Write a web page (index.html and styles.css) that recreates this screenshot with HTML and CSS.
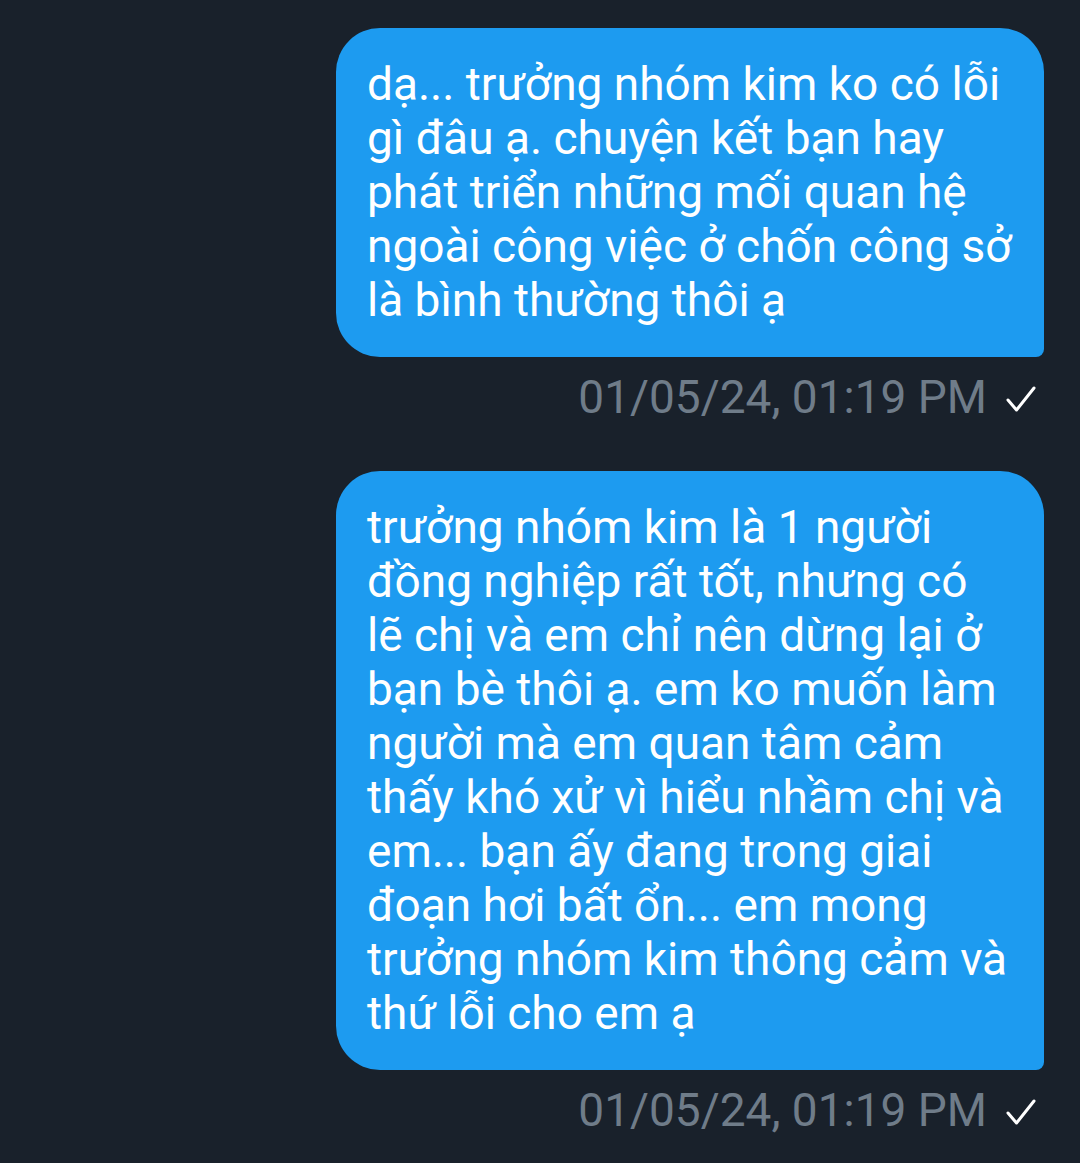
FILE: index.html
```html
<!DOCTYPE html>
<html lang="vi">
<head>
<meta charset="utf-8">
<link rel="stylesheet" href="styles.css">
</head>
<body>
<div class="chat">
  <div class="msg">
    <div class="bubble">dạ... trưởng nhóm kim ko có lỗi gì đâu ạ. chuyện kết bạn hay phát triển những mối quan hệ ngoài công việc ở chốn công sở là bình thường thôi ạ</div>
    <div class="meta"><span class="time">01/05/24, 01:19 PM</span><svg class="check" viewBox="0 0 30 28" width="30" height="28"><path d="M2 15 L10.5 25 L28 3" fill="none" stroke="#ffffff" stroke-width="3" stroke-linecap="round" stroke-linejoin="round"/></svg></div>
  </div>
  <div class="msg">
    <div class="bubble">trưởng nhóm kim là 1 người đồng nghiệp rất tốt, nhưng có lẽ chị và em chỉ nên dừng lại ở bạn bè thôi ạ. em ko muốn làm người mà em quan tâm cảm thấy khó xử vì hiểu nhầm chị và em... bạn ấy đang trong giai đoạn hơi bất ổn... em mong trưởng nhóm kim thông cảm và thứ lỗi cho em ạ</div>
    <div class="meta"><span class="time">01/05/24, 01:19 PM</span><svg class="check" viewBox="0 0 30 28" width="30" height="28"><path d="M2 15 L10.5 25 L28 3" fill="none" stroke="#ffffff" stroke-width="3" stroke-linecap="round" stroke-linejoin="round"/></svg></div>
  </div>
</div>
</body>
</html>
```

FILE: styles.css
```css
html, body {
  margin: 0;
  padding: 0;
  background: #19212b;
}
body {
  font-family: Roboto, "Noto Sans", "Liberation Sans", sans-serif;
  width: 1080px;
  height: 1163px;
  overflow: hidden;
}
.chat {
  display: flex;
  flex-direction: column;
  align-items: flex-end;
  padding: 28px 36px 0 0;
  gap: 50px;
}
.msg {
  display: flex;
  flex-direction: column;
  align-items: flex-end;
}
.bubble {
  box-sizing: border-box;
  width: 708px;
  background: #1d9bf0;
  color: #ffffff;
  font-size: 46px;
  line-height: 54px;
  padding: 29px 30px 30px 31px;
  border-radius: 44px 44px 8px 44px;
}
.meta {
  display: flex;
  align-items: center;
  gap: 19px;
  margin-top: 16px;
  padding-right: 8px;
  height: 48px;
}
.time {
  color: #6f7c89;
  font-size: 46px;
  line-height: 48px;
}
.check {
  display: block;
  margin-top: 3px;
}
```
